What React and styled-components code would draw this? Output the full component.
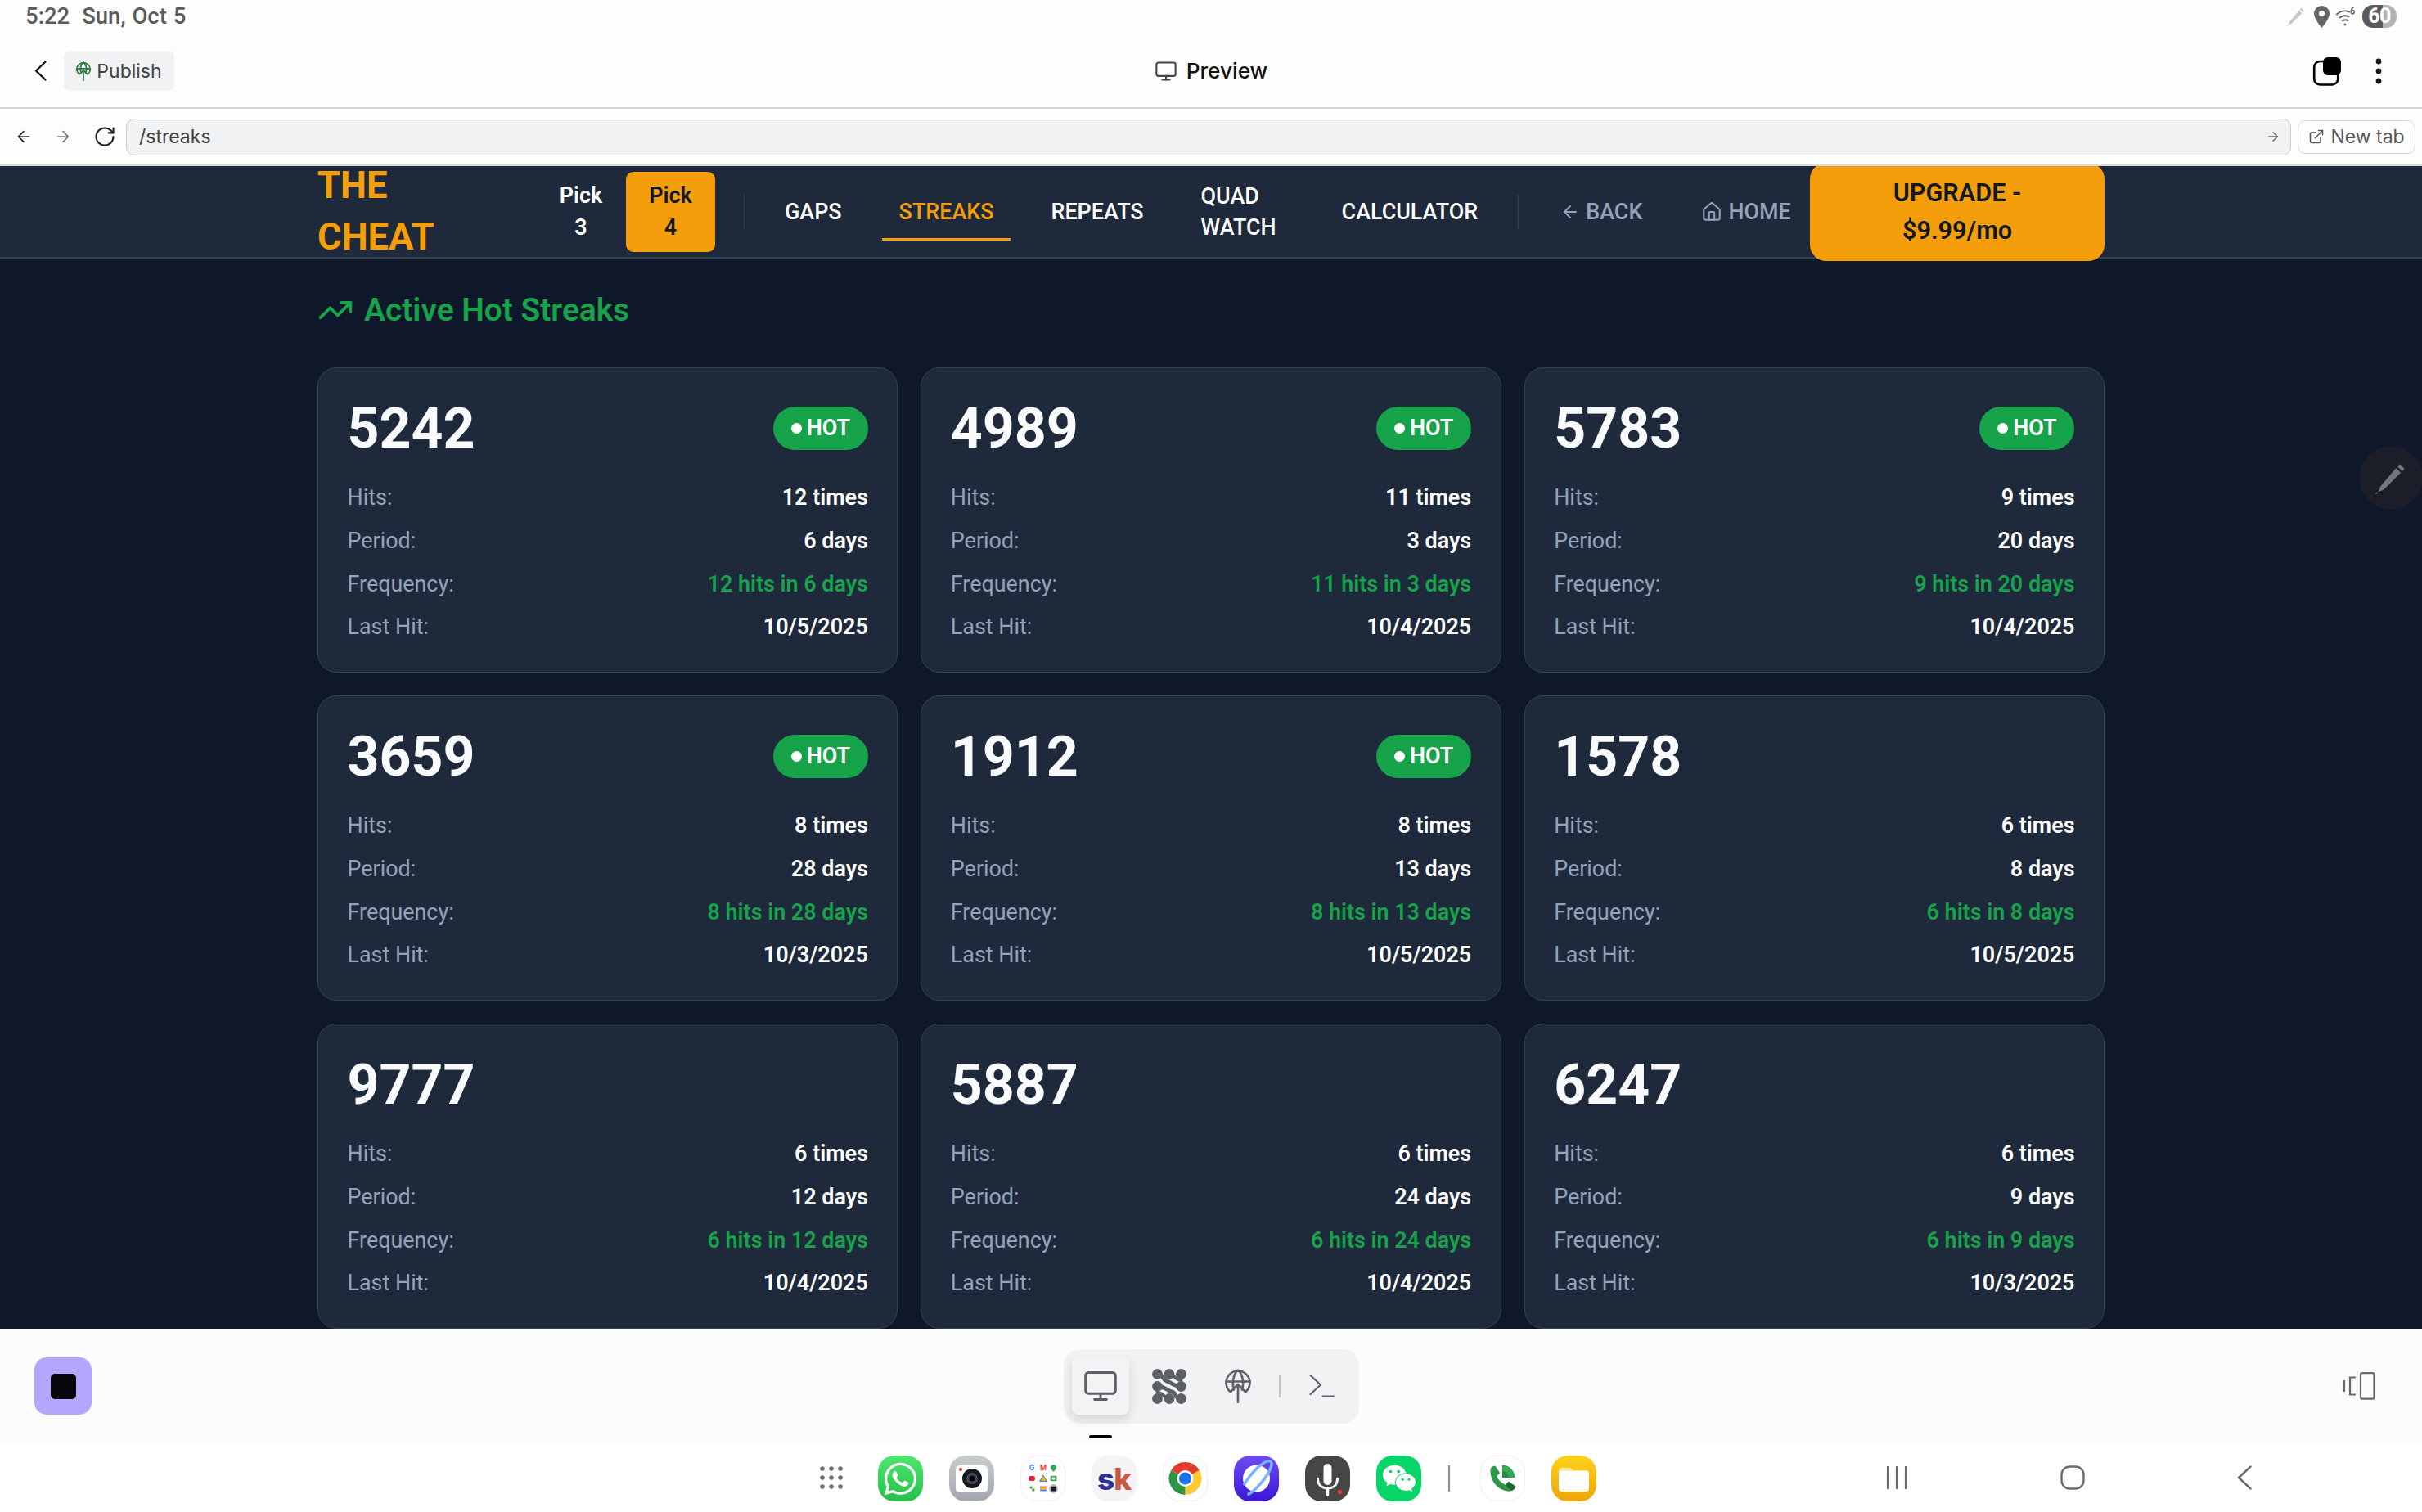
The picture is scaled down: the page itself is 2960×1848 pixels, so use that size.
import React from "react";
import styled, { createGlobalStyle } from "styled-components";
import { ArrowLeft, ArrowRight, RotateCw, ExternalLink, House, TrendingUp, Monitor } from "lucide-react";
import { FaWhatsapp, FaWeixin } from "react-icons/fa";

const Global = createGlobalStyle`
  html, body { margin: 0; padding: 0; width: 2960px; height: 1848px; overflow: hidden; background: #fdfdfd; }
  * { box-sizing: border-box; }
  body { font-family: Inter, "Liberation Sans", sans-serif; }
`;

const Screen = styled.div`
  width: 2960px; height: 1848px; display: flex; flex-direction: column; overflow: hidden;
`;
const TopChrome = styled.div`
  position: relative; z-index: 3; background: #fdfdfd; flex: none;
`;
const StatusBar = styled.div`
  height: 43px; display: flex; align-items: flex-start; justify-content: space-between; padding: 5px 31px 0 31px;
`;
const StatusText = styled.div`
  font-family: Roboto, sans-serif; font-weight: 500; font-size: 27.5px; line-height: 30px; color: #5b5b5b; word-spacing: 1px;
  span { margin-left: 15px; }
`;
const StatusIcons = styled.div`
  display: flex; align-items: center; height: 30px; gap: 8px;
`;
const Battery = styled.div`
  width: 42px; height: 28px; border-radius: 13px;
  background: linear-gradient(90deg, #5a5a5a 0 60%, #b3b3b3 60% 100%);
  color: #fff; font: 700 25px/28px Roboto, sans-serif; text-align: center; letter-spacing: -0.5px;
`;
const TitleBar = styled.div`
  height: 90px; display: grid; grid-template-columns: 1fr auto 1fr; align-items: center;
  padding: 0 49px 1px 42px; border-bottom: 2px solid #d8d8d8;
`;
const TitleLeft = styled.div`
  display: flex; align-items: center; gap: 21px;
`;
const PublishBtn = styled.div`
  width: 135px; height: 49px; background: #f1f2f4; border-radius: 8px; display: flex; align-items: center; justify-content: center; gap: 7px;
  font-size: 23px; color: #444;
`;
const PreviewLabel = styled.div`
  display: flex; align-items: center; gap: 11px; padding-left: 7px; font-size: 26.2px; font-weight: 500; color: #111;
`;
const TitleRight = styled.div`
  display: flex; align-items: center; justify-content: flex-end; gap: 41px;
`;
const UrlRow = styled.div`
  height: 70px; display: flex; align-items: center; padding: 0 8px 0 18px; border-bottom: 2px solid #dcdcdc;
`;
const NavIcons = styled.div`
  width: 136px; display: flex; align-items: center; gap: 26px; flex: none;
`;
const UrlBar = styled.div`
  flex: 1; height: 45px; background: #f1f2f4; border: 1.5px solid #c9cacc; border-radius: 10px; display: flex; align-items: center; justify-content: space-between;
  padding: 0 12px 0 15px; font-size: 23px; color: #3d3d3d; margin-right: 8px;
`;
const NewTab = styled.div`
  width: 144px; height: 41px; border: 1.5px solid #d4d5d8; border-radius: 10px; display: flex; align-items: center; justify-content: center; gap: 7px;
  font-size: 23px; color: #555;
`;

const Main = styled.div`
  flex: none; height: 1421px; background: #0f172a; overflow: hidden; position: relative; font-family: Roboto, sans-serif;
`;
const Header = styled.header`
  height: 113px; background: #1e293b; border-bottom: 2px solid #334155;
`;
const HeaderInner = styled.div`
  width: 2184px; height: 111px; margin: 0 auto; display: flex; align-items: center;
`;
const Logo = styled.div`
  width: 267px; flex: none; padding-right: 100px; margin-top: -2px; font-size: 45.3px; line-height: 63px; font-weight: 700; color: #f59e0b;
`;
const PickBtn = styled.div`
  width: ${(p) => (p.$active ? "109px" : "110px")}; height: 98px; flex: none; border-radius: 9px; display: flex; align-items: center; justify-content: center; text-align: center;
  font-size: 26.9px; line-height: 39px; font-weight: 600;
  background: ${(p) => (p.$active ? "#f59e0b" : "transparent")};
  color: ${(p) => (p.$active ? "#111827" : "#fff")};
`;
const VLine = styled.div`
  width: 1px; height: 42px; flex: none; background: #334155; margin: ${(p) => p.$m};
`;
const LinkGroup = styled.div`
  display: flex; align-items: center; gap: ${(p) => p.$gap}px; flex: none;
`;
const NavLink = styled.div`
  flex: none; height: 70px; padding: 0 21px; display: flex; align-items: center; gap: 7px;
  width: ${(p) => p.$w || "auto"};
  border-top: 3px solid transparent;
  border-bottom: 3px solid ${(p) => (p.$active ? "#f59e0b" : "transparent")};
  font-size: 26.9px; line-height: 38px; font-weight: 500;
  color: ${(p) => (p.$active ? "#f59e0b" : p.$muted ? "#94a3b8" : "#fff")};
`;
const Upgrade = styled.div`
  width: 360px; height: 120px; flex: none; margin-left: auto; background: #f59e0b; border-radius: 20px; display: flex; align-items: center; justify-content: center; text-align: center;
  font-size: 30.6px; line-height: 46px; font-weight: 600; color: #111827; position: relative;
`;
const Content = styled.div`
  width: 2184px; margin: 0 auto; padding-top: 36px;
`;
const Heading = styled.h2`
  margin: 0 0 44px; display: flex; align-items: center; gap: 13px; color: #16a34a; font-size: 38.9px; line-height: 53px; font-weight: 600;
`;
const Grid = styled.div`
  display: grid; grid-template-columns: repeat(3, 1fr); gap: 28px;
`;
const Card = styled.div`
  height: 373px; background: #1e293b; border: 1.5px solid #334155; border-radius: 23px; padding: 35px 35.5px;
`;
const CardHead = styled.div`
  display: flex; align-items: center; justify-content: space-between; height: 76px; margin-bottom: 29px;
`;
const Num = styled.div`
  font-size: 68px; line-height: 76px; font-weight: 700; color: #f8fafc; padding-top: 1px;
`;
const Badge = styled.div`
  height: 53px; width: 116px; border-radius: 27px; background: #16a34a; display: flex; align-items: center; justify-content: center; gap: 6px;
  color: #fff; font-size: 26.9px; font-weight: 600;
  &::before { content: ""; width: 13px; height: 13px; border-radius: 50%; background: #fff; }
`;
const Rows = styled.div`
  display: flex; flex-direction: column; gap: 15px;
`;
const Row = styled.div`
  display: flex; justify-content: space-between; height: 37.8px; line-height: 37.8px; font-size: 26.9px;
`;
const Label = styled.span`
  color: #94a3b8;
`;
const Value = styled.span`
  font-weight: 600; color: ${(p) => (p.$accent ? "#16a34a" : "#fff")};
`;
const Fab = styled.div`
  position: absolute; left: 2883px; top: 342px; width: 78px; height: 78px; border-radius: 50%; background: #1b1e28; display: flex; align-items: center; justify-content: center;
`;

const BottomBar = styled.div`
  height: 140px; flex: none; background: #fcfcfc; display: grid; grid-template-columns: 1fr auto 1fr; align-items: center; padding: 0 42px;
`;
const StopBtn = styled.div`
  width: 70px; height: 70px; border-radius: 15px; background: #b4a5ff; display: flex; align-items: center; justify-content: center;
  &::after { content: ""; width: 31px; height: 31px; background: #07080c; border-radius: 5px; }
`;
const ToolPill = styled.div`
  position: relative; height: 91px; background: #f1f2f4; border-radius: 20px; display: flex; align-items: center; padding: 0 29px 0 10px; gap: 14px;
`;
const ToolBtn = styled.div`
  width: 70px; height: 70px; border-radius: 8px; display: flex; align-items: center; justify-content: center; color: #5d5f66;
  background: ${(p) => (p.$active ? "#f2f3f5" : "transparent")};
  box-shadow: ${(p) => (p.$active ? "0 6px 14px rgba(0,0,0,.13)" : "none")};
`;
const ToolSep = styled.div`
  width: 2px; height: 28px; background: #c3c4c7; margin: 0 21px 0 1px;
`;
const ActiveTick = styled.div`
  position: absolute; left: 31px; bottom: -18px; width: 28px; height: 4px; border-radius: 2px; background: #000;
`;
const RightTool = styled.div`
  display: flex; justify-content: flex-end; padding-right: 15px;
`;
const Dock = styled.div`
  height: 84px; flex: none; background: #fff; display: flex; align-items: center; padding: 0 0 0 1002px;
`;
const Apps = styled.div`
  display: flex; align-items: center; gap: 32px; margin-left: 43px; margin-top: 2px;
`;
const AppIcon = styled.div`
  width: 55px; height: 56px; border-radius: 20px; overflow: hidden; flex: none; display: flex; align-items: center; justify-content: center;
  background: ${(p) => p.$bg};
  border: ${(p) => (p.$outlined ? "1px solid #eeeeee" : "none")};
  color: #fff;
`;
const DockLine = styled.div`
  width: 2px; height: 32px; background: #8a8a8a; margin: 0 5px 0 1px; flex: none;
`;
const SkMark = styled.div`
  font: 800 37px/1 Inter, sans-serif; letter-spacing: -1px; color: #c95945;
  b { color: #2e3192; font-weight: 800; }
`;
const SystemNav = styled.div`
  margin-left: auto; display: flex; align-items: center; width: 447px; margin-right: 208px; justify-content: space-between;
`;

const GlobeUp = ({ w = 32, h = 42, c = "#5d5f66", s = 2.6 }) => (
  <svg width={w} height={h} viewBox="0 0 32 42" fill="none" stroke={c} strokeWidth={s} strokeLinecap="round" strokeLinejoin="round">
    <path d="M6 27.5A14.5 14.5 0 1 1 26 27.5" />
    <path d="M11 25.5C8.5 17 10 7 16 1.5c6 5.5 7.5 15.5 5 24" />
    <path d="M1.5 15.5h29" />
    <path d="M16 41V19M7 28l9-9 9 9" />
  </svg>
);
const Blobs = () => (
  <svg width="42" height="43" viewBox="0 0 42 43">
    <g fill="#5d5f66">
      {[[6.5, 6.5], [21, 6.5], [35.5, 6.5], [6.5, 21.5], [35.5, 21.5], [6.5, 36.5], [21, 36.5], [35.5, 36.5]].map(([x, y]) => (
        <circle key={x + "-" + y} cx={x} cy={y} r="6.4" />
      ))}
    </g>
    <g fill="none" stroke="#5d5f66" strokeLinecap="round">
      <path d="M6.5 6.5c8 0 6 7.5 11.5 8.5 5 1 8 6.5 17.5 6.5" strokeWidth="5" />
      <path d="M21 6.5c6 0 6 6.5 14.5 7.5" strokeWidth="4" />
      <path d="M35.5 36.5c-8 0-6-7.5-11.5-8.5-5-1-8-6.5-17.5-6.5" strokeWidth="5" />
      <path d="M21 36.5c-6 0-6-6.5-14.5-7.5" strokeWidth="4" />
    </g>
  </svg>
);
const Pencil = ({ size, c }) => (
  <svg width={size} height={size} viewBox="0 0 40 40" fill={c}>
    <path d="M29.5 5.5l5 5-2.5 2.5-5-5zM25.5 9.5l5 5L12.5 32.5l-6 2.5 2.5-6z" />
    <path d="M3 37.5l2-2.5 1.5 1.5z" />
  </svg>
);
const PinIcon = () => (
  <svg width="19" height="27" viewBox="0 0 19 27">
    <path fillRule="evenodd" fill="#666" d="M9.5 0A9.5 9.5 0 0 0 0 9.5C0 16 9.5 27 9.5 27S19 16 19 9.5A9.5 9.5 0 0 0 9.5 0zm0 6a3.500 3.500 0 1 1 0 7 3.500 3.500 0 0 1 0-7z" />
  </svg>
);
const WifiIcon = () => (
  <svg width="24" height="27" viewBox="0 0 24 27" fill="none" stroke="#666" strokeWidth="2" strokeLinecap="round">
    <path d="M1 10.5C5 6.5 11 5.5 16 7.5M4.5 14.5c3-2.5 8-3 11-1M8 18.5c2-1.500 4.500-1.500 6.500-.5" />
    <circle cx="11" cy="23" r="1.6" fill="#666" stroke="none" />
    <path d="M21 2c-1.800 1-2.800 3-2.800 5.500 0 1.600.8 2.500 2 2.500s2-.9 2-2.200-.8-2.200-2-2.200-2 .8-2 2" strokeWidth="1.5" />
  </svg>
);
const TabsIcon = () => (
  <svg width="36" height="36" viewBox="0 0 36 36">
    <rect x="2.2" y="6" width="29" height="28.5" rx="7" fill="none" stroke="#000" strokeWidth="2.6" />
    <rect x="13" y="1" width="22" height="22" rx="6" fill="#000" />
  </svg>
);
const MoreIcon = () => (
  <svg width="8" height="32" viewBox="0 0 8 32" fill="#111">
    <circle cx="4" cy="4" r="3.4" /><circle cx="4" cy="16" r="3.4" /><circle cx="4" cy="28" r="3.4" />
  </svg>
);
const BackChevron = () => (
  <svg width="15" height="25" viewBox="0 0 15 25" fill="none" stroke="#111" strokeWidth="2.4" strokeLinecap="round" strokeLinejoin="round">
    <path d="M13.5 1.5L2 12.5l11.5 11" />
  </svg>
);
const Terminal = () => (
  <svg width="32" height="30" viewBox="0 0 32 30" fill="none" stroke="#5d5f66" strokeWidth="2.2" strokeLinecap="round" strokeLinejoin="round">
    <path d="M1.5 2L14 13.5 1.5 25" /><path d="M16.5 27.5H30" />
  </svg>
);
const DualScreen = () => (
  <svg width="40" height="34" viewBox="0 0 40 34" fill="none" stroke="#66686e" strokeWidth="2.2">
    <rect x="22" y="1.2" width="16.5" height="31.5" rx="2" />
    <path d="M16 6.5H9v21h7" /><path d="M2 10v14" />
  </svg>
);
const GridDots = () => (
  <svg width="28" height="28" viewBox="0 0 28 28" fill="#6f6f6f">
    {[3, 14, 25].flatMap((y) => [3, 14, 25].map((x) => <circle key={x + "-" + y} cx={x} cy={y} r="2.8" />))}
  </svg>
);
const CameraArt = () => (
  <svg width="55" height="56" viewBox="0 0 55 56">
    <rect x="8" y="12" width="39" height="33" rx="5" fill="#fff" />
    <circle cx="28" cy="28" r="12" fill="#17181b" />
    <circle cx="28" cy="28" r="7" fill="#3f4a58" />
    <circle cx="28" cy="28" r="3.5" fill="#060606" />
    <circle cx="14" cy="17" r="2" fill="#e0342b" />
  </svg>
);
const GoogleArt = () => (
  <svg width="55" height="56" viewBox="0 0 55 56" fontFamily="Inter, sans-serif" fontSize="9" fontWeight="700" textAnchor="middle">
    <text x="13.5" y="18" fill="#4285f4">G</text>
    <text x="28" y="18" fill="#ea4335">M</text>
    <path d="M41 10.5a3.6 3.6 0 0 1 3.6 3.6c0 2.6-3.6 5.4-3.6 5.4s-3.6-2.8-3.6-5.4a3.6 3.6 0 0 1 3.6-3.6z" fill="#34a853" />
    <rect x="9.5" y="25" width="8" height="6" rx="2" fill="#ea1f3d" />
    <path d="M28 24l4.5 7.5h-9z" fill="#fbbc04" stroke="#1a73e8" strokeWidth="1" />
    <rect x="37" y="24.5" width="8" height="7" rx="1.5" fill="#34a853" />
    <rect x="39" y="26.5" width="4" height="3" fill="#fff" />
    <path d="M11 38h3v3h3v3h-3v-3h-3z" fill="#34a853" />
    <rect x="24" y="38" width="8" height="2" fill="#ea4335" /><rect x="24" y="40" width="8" height="2" fill="#fbbc04" /><rect x="24" y="42" width="8" height="2" fill="#4285f4" />
    <circle cx="41" cy="41" r="5.5" fill="#b0b2b8" /><rect x="38" y="38" width="6" height="6" rx="1" fill="#1c1c1c" />
  </svg>
);
const ChromeArt = () => (
  <svg width="55" height="56" viewBox="0 0 56 56">
    <path d="M28 28L9.8 17.5A21 21 0 0 1 46.2 17.5Z" fill="#e33b2e" />
    <path d="M28 28L46.2 17.5A21 21 0 0 1 28 49Z" fill="#fcc934" />
    <path d="M28 28L28 49A21 21 0 0 1 9.8 17.5Z" fill="#2e9547" />
    <circle cx="28" cy="28" r="10.5" fill="#fff" />
    <circle cx="28" cy="28" r="8" fill="#1a73e8" />
  </svg>
);
const PlanetArt = () => (
  <svg width="55" height="56" viewBox="0 0 55 56">
    <circle cx="27.5" cy="28" r="16.5" fill="#fff" />
    <ellipse cx="27.5" cy="28" rx="27" ry="8" transform="rotate(-50 27.5 28)" fill="none" stroke="#78b4ff" strokeWidth="3.5" strokeDasharray="52 20 60 40" />
  </svg>
);
const MicArt = () => (
  <svg width="55" height="56" viewBox="0 0 55 56" fill="none" stroke="#fff" strokeLinecap="round">
    <rect x="22.5" y="10" width="10" height="26" rx="5" fill="#fff" stroke="none" />
    <path d="M15.5 28c0 8 5 12 12 12s12-4 12-12" strokeWidth="3" />
    <path d="M27.5 40v8" strokeWidth="3.5" />
    <circle cx="42.5" cy="44.5" r="2.8" fill="#e5392c" stroke="none" />
  </svg>
);
const FolderArt = () => (
  <svg width="55" height="56" viewBox="0 0 55 56">
    <path d="M9 19a4 4 0 0 1 4-4h10l4 3h15a4 4 0 0 1 4 4v4H9z" fill="#ffe9a3" />
    <rect x="9" y="19" width="37" height="25" rx="4" fill="#fff" />
  </svg>
);
const PhoneArt = () => (
  <svg width="55" height="56" viewBox="0 0 55 56">
    <path d="M27 11a16 16 0 0 1 16 16H27z" fill="#34a853" />
    <path d="M27 19a8 8 0 0 1 8 8h-8z" fill="#1e8e3e" />
    <path d="M18 12l6 9-4 4c2 5 6 9 11 11l4-4 9 6c-1 4-4 6-8 6C22 44 11 31 12 17c0-2 3-5 6-5z" fill="#2e9547" />
    <path d="M31 36l4-4 9 6c-1 3-3 5-6 5z" fill="#1b6e34" />
  </svg>
);

const cards = [
  { n: "5242", hot: true, hits: 12, days: 6, last: "10/5/2025" },
  { n: "4989", hot: true, hits: 11, days: 3, last: "10/4/2025" },
  { n: "5783", hot: true, hits: 9, days: 20, last: "10/4/2025" },
  { n: "3659", hot: true, hits: 8, days: 28, last: "10/3/2025" },
  { n: "1912", hot: true, hits: 8, days: 13, last: "10/5/2025" },
  { n: "1578", hits: 6, days: 8, last: "10/5/2025" },
  { n: "9777", hits: 6, days: 12, last: "10/4/2025" },
  { n: "5887", hits: 6, days: 24, last: "10/4/2025" },
  { n: "6247", hits: 6, days: 9, last: "10/3/2025" },
];

export default function App() {
  return (
    <Screen>
      <Global />
      <TopChrome>
        <StatusBar>
          <StatusText>5:22<span>Sun, Oct 5</span></StatusText>
          <StatusIcons>
            <Pencil size={28} c="#c8c8c8" />
            <PinIcon />
            <WifiIcon />
            <Battery>60</Battery>
          </StatusIcons>
        </StatusBar>
        <TitleBar>
          <TitleLeft>
            <BackChevron />
            <PublishBtn><GlobeUp w={18} h={24} c="#2c7a3f" s={3} />Publish</PublishBtn>
          </TitleLeft>
          <PreviewLabel><Monitor size={28} strokeWidth={1.8} color="#444" />Preview</PreviewLabel>
          <TitleRight><TabsIcon /><MoreIcon /></TitleRight>
        </TitleBar>
        <UrlRow>
          <NavIcons>
            <ArrowLeft size={22} strokeWidth={1.9} color="#222" />
            <ArrowRight size={22} strokeWidth={1.9} color="#777" />
            <RotateCw size={28} strokeWidth={1.8} color="#222" />
          </NavIcons>
          <UrlBar>/streaks<ArrowRight size={18} strokeWidth={1.8} color="#666" /></UrlBar>
          <NewTab><ExternalLink size={20} strokeWidth={1.8} />New tab</NewTab>
        </UrlRow>
      </TopChrome>
      <Main>
        <Header>
          <HeaderInner>
            <Logo>THE CHEAT</Logo>
            <PickBtn>Pick<br />3</PickBtn>
            <PickBtn $active>Pick<br />4</PickBtn>
            <VLine $m="0 28px 0 35px" />
            <LinkGroup $gap={28}>
              <NavLink>GAPS</NavLink>
              <NavLink $active>STREAKS</NavLink>
              <NavLink>REPEATS</NavLink>
              <NavLink $w="144px">QUAD WATCH</NavLink>
              <NavLink>CALCULATOR</NavLink>
            </LinkGroup>
            <VLine $m="0 30px 0 28px" />
            <LinkGroup $gap={30}>
              <NavLink $muted><ArrowLeft size={24} strokeWidth={2} />BACK</NavLink>
              <NavLink $muted><House size={26} strokeWidth={1.9} />HOME</NavLink>
            </LinkGroup>
            <Upgrade>UPGRADE -<br />$9.99/mo</Upgrade>
          </HeaderInner>
        </Header>
        <Content>
          <Heading><TrendingUp size={44} strokeWidth={2.1} />Active Hot Streaks</Heading>
          <Grid>
            {cards.map((c) => (
              <Card key={c.n}>
                <CardHead>
                  <Num>{c.n}</Num>
                  {c.hot && <Badge>HOT</Badge>}
                </CardHead>
                <Rows>
                  <Row><Label>Hits:</Label><Value>{c.hits} times</Value></Row>
                  <Row><Label>Period:</Label><Value>{c.days} days</Value></Row>
                  <Row><Label>Frequency:</Label><Value $accent>{c.hits} hits in {c.days} days</Value></Row>
                  <Row><Label>Last Hit:</Label><Value>{c.last}</Value></Row>
                </Rows>
              </Card>
            ))}
          </Grid>
        </Content>
        <Fab><Pencil size={46} c="#70757f" /></Fab>
      </Main>
      <BottomBar>
        <StopBtn />
        <ToolPill>
          <ToolBtn $active><Monitor size={44} strokeWidth={1.6} /></ToolBtn>
          <ToolBtn><Blobs /></ToolBtn>
          <ToolBtn><GlobeUp /></ToolBtn>
          <ToolSep />
          <Terminal />
          <ActiveTick />
        </ToolPill>
        <RightTool><DualScreen /></RightTool>
      </BottomBar>
      <Dock>
        <GridDots />
        <Apps>
          <AppIcon $bg="linear-gradient(#4fe66e,#25c04a)"><FaWhatsapp size={45} /></AppIcon>
          <AppIcon $bg="linear-gradient(#c9cdce,#a3a6ae)"><CameraArt /></AppIcon>
          <AppIcon $bg="#fff" $outlined><GoogleArt /></AppIcon>
          <AppIcon $bg="#f6f3f7"><SkMark><b>s</b>k</SkMark></AppIcon>
          <AppIcon $bg="#fff" $outlined><ChromeArt /></AppIcon>
          <AppIcon $bg="linear-gradient(#6f4bf2,#3a16d8)"><PlanetArt /></AppIcon>
          <AppIcon $bg="#464646"><MicArt /></AppIcon>
          <AppIcon $bg="#07d568"><FaWeixin size={42} /></AppIcon>
          <DockLine />
          <AppIcon $bg="#fff" $outlined><PhoneArt /></AppIcon>
          <AppIcon $bg="linear-gradient(#fed31a,#eea508)"><FolderArt /></AppIcon>
        </Apps>
        <SystemNav>
          <svg width="26" height="28" viewBox="0 0 26 28" stroke="#6b6b6b" strokeWidth="2.2" strokeLinecap="round"><path d="M2 1v26M13 1v26M24 1v26" /></svg>
          <svg width="30" height="30" viewBox="0 0 30 30" fill="none" stroke="#6b6b6b" strokeWidth="2.4"><rect x="1.5" y="1.5" width="27" height="27" rx="10" /></svg>
          <svg width="18" height="30" viewBox="0 0 18 30" fill="none" stroke="#6b6b6b" strokeWidth="2.4" strokeLinecap="round" strokeLinejoin="round"><path d="M16.5 1.5L2 15l14.5 13.5" /></svg>
        </SystemNav>
      </Dock>
    </Screen>
  );
}
